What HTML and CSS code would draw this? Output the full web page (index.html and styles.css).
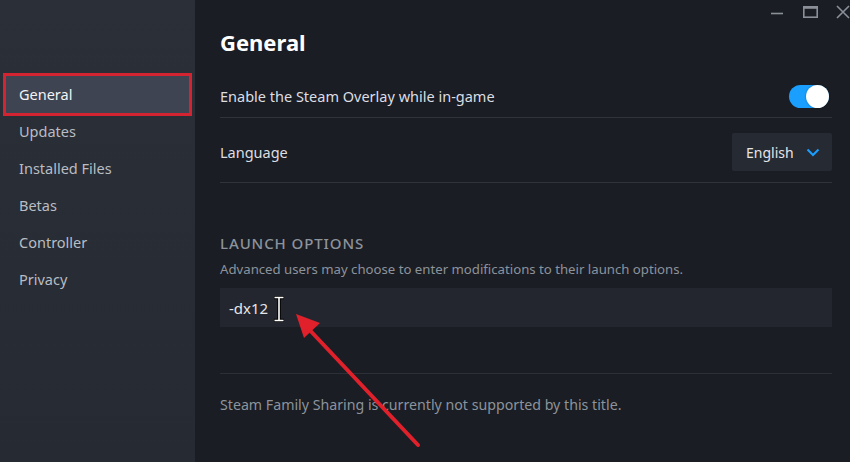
FILE: index.html
```html
<!DOCTYPE html>
<html>
<head>
<meta charset="utf-8">
<link rel="stylesheet" href="styles.css">
</head>
<body>
<div class="app">
  <aside class="sidebar">
    <nav class="nav">
      <div class="nav-item selected">General</div>
      <div class="nav-item">Updates</div>
      <div class="nav-item">Installed Files</div>
      <div class="nav-item">Betas</div>
      <div class="nav-item">Controller</div>
      <div class="nav-item">Privacy</div>
    </nav>
  </aside>
  <main class="main">
    <h1 class="title">General</h1>
    <div class="row row-overlay">
      <span class="label">Enable the Steam Overlay while in-game</span>
      <span class="toggle"><span class="knob"></span></span>
    </div>
    <div class="row row-lang">
      <span class="label">Language</span>
      <div class="dropdown">
        <span>English</span>
        <svg class="chev" width="14" height="9" viewBox="0 0 14 9"><path d="M1.5 1.5 L7 7 L12.5 1.5" fill="none" stroke="#1a9fff" stroke-width="2"/></svg>
      </div>
    </div>
    <div class="section-title">LAUNCH OPTIONS</div>
    <div class="desc">Advanced users may choose to enter modifications to their launch options.</div>
    <div class="input"><span class="value">-dx12</span>
      <svg class="ibeam" width="12" height="26" viewBox="0 0 12 26"><path d="M1 1.5 H11 M6 1.5 V24.5 M1 24.5 H11" fill="none" stroke="#000" stroke-width="3.5"/><path d="M1.5 1.5 H10.5 M6 1.5 V24.5 M1.5 24.5 H10.5" fill="none" stroke="#fff" stroke-width="1.6"/></svg>
    </div>
    <div class="divider"></div>
    <div class="family">Steam Family Sharing is currently not supported by this title.</div>
  </main>
  <div class="winctl">
    <svg width="80" height="20" viewBox="0 0 80 20">
      <path d="M1 13.5 H13" stroke="#8a8f98" stroke-width="1.6"/>
      <rect x="33.8" y="6.8" width="13.4" height="10.4" fill="none" stroke="#8a8f98" stroke-width="1.6"/>
      <path d="M33 7.5 H48" stroke="#8a8f98" stroke-width="2.6"/>
      <path d="M67 6 L79 18 M79 6 L67 18" stroke="#8a8f98" stroke-width="1.6"/>
    </svg>
  </div>
  <svg class="arrow" width="850" height="462" viewBox="0 0 850 462">
    <path d="M418 445 L304 324" stroke="#e0212b" stroke-width="4" stroke-linecap="round"/>
    <polygon points="296,314 320,323 304,338" fill="#e0212b"/>
  </svg>
</div>
</body>
</html>
```
FILE: styles.css
```css
html, body {
  margin: 0;
  padding: 0;
  width: 850px;
  height: 462px;
  overflow: hidden;
  background: #1a1d24;
  font-family: "Noto Sans", "Open Sans", sans-serif;
}
.app {
  position: relative;
  display: flex;
  width: 850px;
  height: 462px;
}
.sidebar {
  width: 195px;
  flex: none;
  background: linear-gradient(180deg, #2b2f38 0%, #262a32 100%);
}
.nav {
  padding-top: 76px;
  display: flex;
  flex-direction: column;
}
.nav-item {
  height: 37px;
  line-height: 37px;
  margin: 0 6px;
  padding-left: 13px;
  font-size: 14.5px;
  color: #b9bdc3;
}
.nav-item.selected {
  background: #3e4451;
  color: #f2f3f5;
  outline: 3px solid #d42331;
}
.main {
  flex: 1;
  padding: 0 18px 0 25px;
  display: flex;
  flex-direction: column;
}
.title {
  margin: 27px 0 0 0;
  height: 30px;
  line-height: 30px;
  font-size: 22px;
  font-weight: 700;
  color: #ffffff;
}
.row {
  display: flex;
  align-items: center;
  justify-content: space-between;
  border-bottom: 1px solid #2f333c;
  box-sizing: content-box;
}
.label {
  font-size: 14.5px;
  color: #dcdee2;
}
.row-overlay {
  margin-top: 19px;
  height: 41px;
}
.row-overlay .label { margin-top: -1px; }
.toggle {
  width: 40px;
  height: 23px;
  border-radius: 12px;
  background: #1a9fff;
  display: flex;
  justify-content: flex-end;
  align-items: center;
  margin-right: 3px;
}
.knob {
  width: 23px;
  height: 23px;
  border-radius: 50%;
  background: #ffffff;
  box-shadow: 0 0 2px rgba(0,0,0,0.4);
}
.row-lang {
  height: 60px;
  padding-top: 4px;
}
.dropdown {
  width: 100px;
  height: 38px;
  box-sizing: border-box;
  background: #262a32;
  border-radius: 2px;
  display: flex;
  align-items: center;
  padding-left: 14px;
  gap: 12px;
  font-size: 14px;
  color: #e3e5e8;
}
.chev { margin-top: 1px; }
.section-title {
  margin-top: 50px;
  height: 20px;
  line-height: 20px;
  font-size: 15px;
  font-weight: 500;
  color: #8d939b;
  letter-spacing: 0.9px;
}
.desc {
  margin-top: 7px;
  height: 18px;
  line-height: 18px;
  font-size: 13.2px;
  color: #8d939b;
}
.input {
  margin-top: 10px;
  height: 39px;
  background: #23262e;
  display: flex;
  align-items: center;
  padding-left: 9px;
  gap: 5px;
  font-size: 15px;
  color: #e3e5e8;
}
.ibeam { margin-top: 2px; }
.divider {
  margin-top: 46px;
  height: 1px;
  background: #2b2f37;
}
.family {
  margin-top: 22px;
  height: 18px;
  line-height: 18px;
  font-size: 14.2px;
  color: #8d939b;
}
.winctl {
  position: absolute;
  top: 0;
  left: 770px;
}
.arrow {
  position: absolute;
  top: 0;
  left: 0;
  pointer-events: none;
}
```
